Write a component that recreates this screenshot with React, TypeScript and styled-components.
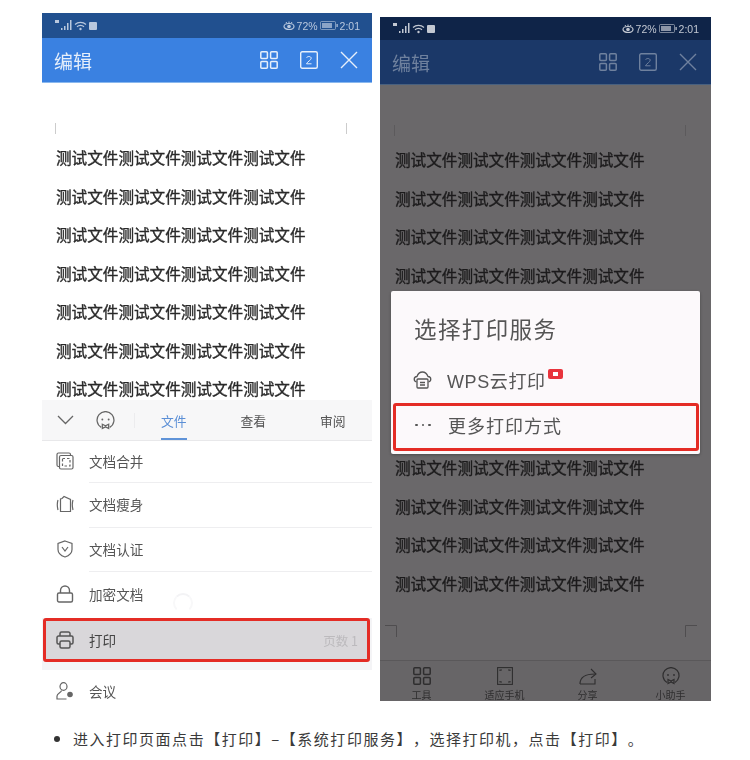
import React from "react";
import styled, {createGlobalStyle} from "styled-components";

const Global = createGlobalStyle`
  html, body { margin: 0; padding: 0; background: #fff; }
  body { font-family: "Liberation Sans", "Noto Sans CJK SC", sans-serif; text-spacing-trim: space-all; }
`;

const Page = styled.div`
  width: 750px;
  height: 760px;
  overflow: hidden;
`;
const Shots = styled.div`
  display: flex;
  align-items: flex-start;
  height: 722px;
  padding-left: 42px;
  gap: 8px;
`;
const Phone = styled.div<{$top: number; $dim?: boolean}>`
  position: relative;
  width: ${p => (p.$dim ? 331 : 330)}px;
  margin-top: ${p => p.$top}px;
  height: ${p => (p.$dim ? 684 : 688)}px;
  display: flex;
  flex-direction: column;
  overflow: hidden;
  background: ${p => (p.$dim ? "#6a686a" : "#fff")};
  filter: blur(0.35px);
`;

//--------top bars--------------------------------
const Status = styled.div<{$dim?: boolean}>`
  height: ${p => (p.$dim ? 23 : 25)}px;
  flex: none;
  background: ${p => (p.$dim ? "#0f2448" : "#21508f")};
  color: ${p => (p.$dim ? "#c3c8d2" : "#b9c8de")};
  display: flex;
  align-items: center;
  justify-content: space-between;
  padding: 0 12px 0 13px;
  font-size: 10.5px;
`;
const StatusGroup = styled.div`
  display: flex;
  align-items: center;
  gap: 2px;
`;
const Header = styled.div<{$dim?: boolean}>`
  height: 45px;
  flex: none;
  box-sizing: border-box;
  background: ${p => (p.$dim ? "#1b3868" : "#3a81e1")};
  border-bottom: 1px solid ${p => (p.$dim ? "#48607f" : "#8ab8ee")};
  color: ${p => (p.$dim ? "#6f819e" : "#e6effb")};
  display: flex;
  align-items: center;
  padding: 0 14px 0 12px;
`;
const HeaderTitle = styled.div`
  font-size: 19px;
  flex: 1;
  font-family: "Noto Sans CJK SC", sans-serif;
`;
const HeaderIcons = styled.div`
  display: flex;
  align-items: center;
  gap: 22px;
`;

//--------document--------------------------------
const Doc = styled.div<{$dim?: boolean; $height: number}>`
  height: ${p => p.$height}px;
  flex: none;
  overflow: hidden;
  box-sizing: border-box;
  padding: 40px 14px 0 ${p => (p.$dim ? 15 : 14)}px;
  background: ${p => (p.$dim ? "#6a686a" : "#fff")};
`;
const Ticks = styled.div<{$color: string}>`
  display: flex;
  justify-content: space-between;
  height: 11px;
  padding-right: 11px;
  margin-left: -1px;
  margin-bottom: 4px;
  i {
    display: block;
    width: 1px;
    height: 11px;
    background: ${p => p.$color};
  }
`;
// lines behind the dialog stay in the flow but are not painted
const DocLine = styled.div<{$dim?: boolean; $covered?: boolean}>`
  height: 38.55px;
  line-height: 38.55px;
  font-family: "Noto Sans CJK SC", sans-serif;
  font-size: 15.6px;
  font-weight: 400;
  -webkit-text-stroke: 0.35px currentColor;
  white-space: nowrap;
  visibility: ${p => (p.$covered ? "hidden" : "visible")};
  color: ${p => (p.$dim ? "#1c1b1c" : "#2a2a2a")};
`;
const Corners = styled.div`
  display: flex;
  justify-content: space-between;
  margin: 22px 0 0 -10px;
`;

//--------left panel--------------------------------
const Tabs = styled.div`
  height: 41px;
  flex: none;
  box-sizing: border-box;
  background: #f7f7f8;
  border-bottom: 1px solid #e8e8ea;
  display: flex;
  align-items: center;
  padding-left: 15px;
`;
const TabIcons = styled.div`
  display: flex;
  align-items: center;
  gap: 22px;
  width: 104px;
  flex: none;
`;
const TabDivider = styled.i`
  display: block;
  width: 1px;
  height: 15px;
  margin-left: -3px;
  background: #ececee;
`;
const Tab = styled.div<{$active?: boolean}>`
  position: relative;
  flex: none;
  box-sizing: border-box;
  width: 79.5px;
  height: 40px;
  padding-top: 11px;
  font-size: 12.8px;
  line-height: 20px;
  color: ${p => (p.$active ? "#5b8fd6" : "#555")};
  font-family: "Noto Sans CJK SC", sans-serif;
  &::after {
    content: "";
    display: ${p => (p.$active ? "block" : "none")};
    position: absolute;
    left: 0;
    bottom: 0;
    width: 26px;
    height: 2px;
    background: #5f93d8;
  }
`;
const Menu = styled.div`
  flex: none;
`;
const MenuRow = styled.div<{$height: number; $line?: boolean; $shift?: number}>`
  height: ${p => p.$height}px;
  box-sizing: border-box;
  display: flex;
  align-items: center;
  gap: 15px;
  padding: ${p => (p.$shift ? p.$shift : 0)}px 0 3px 14px;
  position: relative;
  color: #555;
  font-size: 13.6px;
  font-family: "Noto Sans CJK SC", sans-serif;
  &::after {
    content: "";
    display: ${p => (p.$line ? "block" : "none")};
    position: absolute;
    left: 47px;
    right: 0;
    bottom: 0;
    height: 1px;
    background: #eeeef0;
  }
`;
const Spinner = styled.i`
  position: absolute;
  left: 131px;
  top: 580px;
  width: 20px;
  height: 20px;
  box-sizing: border-box;
  border: 2px solid transparent;
  border-top-color: #f3f3f5;
  border-left-color: #f8f8f9;
  border-right-color: #f8f8f9;
  border-radius: 50%;
`;
const PrintRow = styled.div`
  height: 52px;
  background: #f4f4f6;
`;
const PrintInner = styled.div`
  height: 44px;
  box-sizing: border-box;
  border: 3px solid #e42c25;
  border-radius: 3px;
  background: #d9d7da;
  margin: 0 2px 0 1px;
  display: flex;
  align-items: center;
  gap: 15px;
  padding: 0 9px 0 10px;
  color: #444;
  font-size: 13.6px;
  font-family: "Noto Sans CJK SC", sans-serif;
  span:last-child {
    margin-left: auto;
    color: #bcbabd;
    font-size: 12.5px;
  }
`;

//--------right panel--------------------------------
const BottomBar = styled.div`
  height: 41px;
  flex: none;
  box-sizing: border-box;
  border-top: 1px solid #5a585a;
  background: #676567;
  display: grid;
  grid-template-columns: repeat(4, 83px);
  padding-top: 6px;
  overflow: hidden;
`;
const BarItem = styled.div`
  display: flex;
  flex-direction: column;
  align-items: center;
  color: #2f2e2f;
  font-size: 10px;
  line-height: 11px;
  font-family: "Noto Sans CJK SC", sans-serif;
  svg { margin-bottom: 4px; }
`;
const Dialog = styled.div`
  position: absolute;
  left: 11px;
  top: 274px;
  width: 309px;
  height: 163px;
  background: #fcf9fb;
  border-radius: 2px;
  box-shadow: 0 1px 3px rgba(0, 0, 0, 0.3);
  font-family: "Noto Sans CJK SC", sans-serif;
  color: #555;
`;
const DialogTitle = styled.div`
  font-size: 22.5px;
  letter-spacing: 1.4px;
  line-height: 30px;
  padding: 22px 0 0 23px;
`;
const DialogRow = styled.div`
  display: flex;
  align-items: center;
  height: 32px;
  margin-top: 21px;
  padding-left: 22px;
  gap: 15px;
  font-size: 18px;
  letter-spacing: 0.6px;
  font-family: "Liberation Sans", "Noto Sans CJK SC", sans-serif;
`;
const Badge = styled.span`
  display: inline-block;
  width: 15px;
  height: 10px;
  margin: -13px 0 0 -13px;
  background: #e8343c;
  border-radius: 2px;
  position: relative;
  &::after {
    content: "";
    position: absolute;
    left: 5px;
    top: 3px;
    width: 5px;
    height: 4px;
    background: #fff;
  }
`;
const MoreRow = styled.div`
  box-sizing: border-box;
  height: 48px;
  margin: 7px 1px 0 2px;
  border: 3px solid #e42c25;
  border-radius: 3px;
  display: flex;
  align-items: center;
  padding: 0 0 4px 19px;
  gap: 16px;
  font-size: 18px;
  letter-spacing: 1px;
`;
const Dots = styled.span`
  display: flex;
  gap: 4px;
  width: 17px;
  flex: none;
  i {
    display: block;
    width: 2.5px;
    height: 2.5px;
    border-radius: 50%;
    background: #555;
  }
`;

//--------caption--------------------------------
const Caption = styled.ul`
  margin: 0;
  padding: 0 0 0 73px;
  list-style: none;
`;
const CaptionItem = styled.li`
  position: relative;
  font-family: "Noto Sans CJK SC", sans-serif;
  font-size: 15px;
  letter-spacing: 1.52px;
  line-height: 34px;
  color: #3a3a3a;
  white-space: nowrap;
  &::before {
    content: "";
    position: absolute;
    left: -19px;
    top: 14px;
    width: 6px;
    height: 6px;
    border-radius: 50%;
    background: #333;
  }
`;

//--------icons--------------------------------
type IconProps = {c?: string};

const Signal = ({c = "#b9c8de"}: IconProps) => (
    <svg width="32" height="11" viewBox="0 0 32 11" fill={c}>
        <rect x="0" y="0" width="4" height="3"/>
        <rect x="6" y="8" width="1.5" height="2"/>
        <rect x="9" y="6" width="1.5" height="4"/>
        <rect x="12" y="3" width="1.5" height="7"/>
        <rect x="15" y="0" width="1.5" height="10"/>
        <path d="M20 4.5a8 8 0 0 1 11 0" fill="none" stroke={c} strokeWidth="1.2"/>
        <path d="M22 6.8a5 5 0 0 1 7 0" fill="none" stroke={c} strokeWidth="1.2"/>
        <circle cx="25.5" cy="9" r="1.2"/>
    </svg>
);
const Square = ({c = "#b9c8de"}: IconProps) => (
    <svg width="8" height="8" viewBox="0 0 8 8"><rect width="8" height="8" rx="1" fill={c}/></svg>
);
const Eye = ({c = "#b9c8de"}: IconProps) => (
    <svg width="12" height="10" viewBox="0 0 12 10">
        <ellipse cx="6" cy="5.5" rx="5" ry="3" fill="none" stroke={c} strokeWidth="1.2"/>
        <circle cx="6" cy="5.5" r="1.8" fill={c}/>
        <path d="M3 1l1 1.5M6 .5v2M9 1L8 2.5" stroke={c} strokeWidth="1"/>
    </svg>
);
const Battery = ({c = "#b9c8de"}: IconProps) => (
    <svg width="18" height="9" viewBox="0 0 18 9">
        <rect x=".5" y=".5" width="15" height="8" rx="1" fill="none" stroke={c} strokeOpacity=".6"/>
        <rect x="2" y="2" width="10" height="5" fill={c} fillOpacity=".7"/>
        <rect x="16.5" y="3" width="1.2" height="3" fill={c}/>
    </svg>
);
const Apps = ({c = "#e6effb"}: IconProps) => (
    <svg width="18" height="18" viewBox="0 0 18 18" fill="none" stroke={c} strokeWidth="1.5">
        <rect x=".8" y=".8" width="6.6" height="6.6" rx="1"/>
        <rect x="10.6" y=".8" width="6.6" height="6.6" rx="1"/>
        <rect x=".8" y="10.6" width="6.6" height="6.6" rx="1"/>
        <rect x="10.6" y="10.6" width="6.6" height="6.6" rx="1"/>
    </svg>
);
const PageCount = ({c = "#e6effb"}: IconProps) => (
    <svg width="18" height="18" viewBox="0 0 18 18" fill="none" stroke={c} strokeWidth="1.4">
        <rect x=".7" y=".7" width="16.6" height="16.6" rx="1.5"/>
        <path d="M6.6 6.8c.3-1.6 4.5-1.9 4.6.4.1 1.8-3.8 3.4-4.7 5.6h5" strokeWidth="1"/>
    </svg>
);
const Close = ({c = "#e6effb"}: IconProps) => (
    <svg width="18" height="18" viewBox="0 0 18 18" stroke={c} strokeWidth="1.4">
        <path d="M1 1l16 16M17 1L1 17"/>
    </svg>
);
const Chevron = () => (
    <svg width="17" height="10" viewBox="0 0 17 10" fill="none" stroke="#666" strokeWidth="1.3">
        <path d="M1 1l7.5 7.5L16 1"/>
    </svg>
);
const Bot = ({c = "#666", s = 19}: IconProps & {s?: number}) => (
    <svg width={s} height={s} viewBox="0 0 18 18" fill="none" stroke={c} strokeWidth="1.2">
        <path d="M5 15.5A8 8 0 1 1 13 15.5"/>
        <circle cx="6" cy="8" r=".9" fill={c} stroke="none"/>
        <circle cx="12" cy="8" r=".9" fill={c} stroke="none"/>
        <path d="M6 12.5l3 1.5 3-1.5v4l-3-1.5-3 1.5z"/>
    </svg>
);
const Merge = () => (
    <svg width="18" height="18" viewBox="0 0 18 18" fill="none" stroke="#666" strokeWidth="1.2">
        <path d="M3 14.5H2.5A1.5 1.5 0 0 1 1 13V2.5A1.5 1.5 0 0 1 2.5 1H13a1.5 1.5 0 0 1 1.5 1.5V3"/>
        <rect x="3.5" y="3.5" width="13.5" height="13.5" rx="1.5"/>
        <rect x="6.5" y="6.5" width="7.5" height="7.5" strokeDasharray="2.5 2"/>
    </svg>
);
const Slim = () => (
    <svg width="18" height="18" viewBox="0 0 18 18" fill="none" stroke="#666" strokeWidth="1.2">
        <path d="M4.5 16.5V4L6 3.5 8 1.5l6.5 3v12z"/>
        <path d="M2 5c-1 3-1 6 0 10M17 5c-1 3-1 6 0 10"/>
    </svg>
);
const Shield = () => (
    <svg width="18" height="18" viewBox="0 0 18 18" fill="none" stroke="#666" strokeWidth="1.2">
        <path d="M9 1l7 2.5v6c0 4-4 6.5-7 7.5-3-1-7-3.5-7-7.5v-6z"/>
        <path d="M6 7l3 4 3-4"/>
    </svg>
);
const Lock = () => (
    <svg width="18" height="18" viewBox="0 0 18 18" fill="none" stroke="#666" strokeWidth="1.4">
        <rect x="1.5" y="8" width="15" height="9" rx="1.5"/>
        <path d="M4.5 8V5.5a4.5 4.5 0 0 1 9 0V8"/>
    </svg>
);
const Printer = () => (
    <svg width="18" height="18" viewBox="0 0 18 18" fill="none" stroke="#555" strokeWidth="1.5">
        <path d="M4 5V2.5A1.5 1.5 0 0 1 5.5 1h7A1.5 1.5 0 0 1 14 2.5V5"/>
        <path d="M4 13H2.5A1.5 1.5 0 0 1 1 11.5v-5A1.5 1.5 0 0 1 2.5 5h13A1.5 1.5 0 0 1 17 6.5v5a1.5 1.5 0 0 1-1.5 1.5H14"/>
        <rect x="4" y="10" width="10" height="7" rx="1.5"/>
    </svg>
);
const Meeting = () => (
    <svg width="18" height="18" viewBox="0 0 18 18" fill="none" stroke="#666" strokeWidth="1.2">
        <ellipse cx="7.5" cy="4.5" rx="3.5" ry="3.8"/>
        <path d="M5.5 8.5c0 2-4.5 2.5-4.5 5.5v3h9.500"/>
        <circle cx="14" cy="12.5" r="2.8" fill="#666" stroke="none"/>
    </svg>
);
const CloudPrint = () => (
    <svg width="19" height="18" viewBox="0 0 19 18" fill="none" stroke="#555" strokeWidth="1.3">
        <path d="M3.5 11C.3 10 .5 5.8 4 5.5 5 2.5 7.5 1 9.500 1 12 1 14 3 15 5.500c3.500.3 3.700 4.500.5 5.500"/>
        <rect x="4" y="8" width="11" height="9" rx="1" fill="#fcf9fb"/>
        <path d="M7 11.5h5M7 14h5"/>
    </svg>
);
const Fit = () => (
    <svg width="16" height="18" viewBox="0 0 16 18" fill="none" stroke="#2f2e2f" strokeWidth="1.1">
        <rect x=".6" y=".6" width="14.8" height="16.8"/>
        <path d="M3 4V3h2M13 4V3h-2M3 14v1h2M13 14v1h-2"/>
    </svg>
);
const Share = () => (
    <svg width="18" height="18" viewBox="0 0 18 18" fill="none" stroke="#2f2e2f" strokeWidth="1.1">
        <path d="M1 17c0-6 4-10 15-10"/>
        <path d="M12 2l5 5-5 4M1 17h15v-5"/>
    </svg>
);

const DOC_TEXT = "测试文件测试文件测试文件测试文件";
const times = (n: number) => Array.from({length: n}, (_, i) => i);

const LeftShot = () => (
    <Phone $top={13}>
        <Status>
            <StatusGroup><Signal/><Square/></StatusGroup>
            <StatusGroup><Eye/><span>72%</span><Battery/><span>2:01</span></StatusGroup>
        </Status>
        <Header>
            <HeaderTitle>编辑</HeaderTitle>
            <HeaderIcons><Apps/><PageCount/><Close/></HeaderIcons>
        </Header>
        <Doc $height={317}>
            <Ticks $color="#ccc"><i/><i/></Ticks>
            {times(7).map(i => <DocLine key={i}>{DOC_TEXT}</DocLine>)}
        </Doc>
        <Tabs>
            <TabIcons><Chevron/><Bot/><TabDivider/></TabIcons>
            <Tab $active>文件</Tab>
            <Tab>查看</Tab>
            <Tab>审阅</Tab>
        </Tabs>
        <Menu>
            <MenuRow $height={42} $line><Merge/>文档合并</MenuRow>
            <MenuRow $height={45} $line><Slim/>文档瘦身</MenuRow>
            <MenuRow $height={44} $line><Shield/>文档认证</MenuRow>
            <MenuRow $height={46}><Lock/>加密文档</MenuRow>
            <PrintRow>
                <PrintInner><Printer/><span>打印</span><span>页数 1</span></PrintInner>
            </PrintRow>
            <MenuRow $height={30} $shift={15}><Meeting/>会议</MenuRow>
        </Menu>
        <Spinner/>
    </Phone>
);

const RightShot = () => (
    <Phone $top={17} $dim>
        <Status $dim>
            <StatusGroup><Signal c="#c3c8d2"/><Square c="#c3c8d2"/></StatusGroup>
            <StatusGroup><Eye c="#c3c8d2"/><span>72%</span><Battery c="#c3c8d2"/><span>2:01</span></StatusGroup>
        </Status>
        <Header $dim>
            <HeaderTitle>编辑</HeaderTitle>
            <HeaderIcons><Apps c="#6f819e"/><PageCount c="#6f819e"/><Close c="#6f819e"/></HeaderIcons>
        </Header>
        <Doc $dim $height={575}>
            <Ticks $color="#5c5a5c"><i/><i/></Ticks>
            {times(12).map(i => <DocLine key={i} $dim $covered={i >= 4 && i < 8}>{DOC_TEXT}</DocLine>)}
            <Corners>
                <svg width="12" height="12" fill="none" stroke="#4f4d4f"><path d="M0 .5h11.5V12"/></svg>
                <svg width="12" height="12" fill="none" stroke="#4f4d4f"><path d="M12 .5H.5V12"/></svg>
            </Corners>
        </Doc>
        <BottomBar>
            <BarItem><Apps c="#2f2e2f"/>工具</BarItem>
            <BarItem><Fit/>适应手机</BarItem>
            <BarItem><Share/>分享</BarItem>
            <BarItem><Bot c="#2f2e2f" s={18}/>小助手</BarItem>
        </BottomBar>
        <Dialog>
            <DialogTitle>选择打印服务</DialogTitle>
            <DialogRow><CloudPrint/><span>WPS云打印</span><Badge/></DialogRow>
            <MoreRow><Dots><i/><i/><i/></Dots><span>更多打印方式</span></MoreRow>
        </Dialog>
    </Phone>
);

const App = () => (
    <Page>
        <Global/>
        <Shots>
            <LeftShot/>
            <RightShot/>
        </Shots>
        <Caption>
            <CaptionItem>进入打印页面点击【打印】–【系统打印服务】，选择打印机，点击【打印】。</CaptionItem>
        </Caption>
    </Page>
);
export default App;
